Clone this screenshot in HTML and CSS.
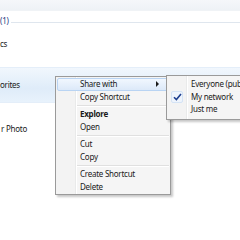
FILE: index.html
```html
<!DOCTYPE html>
<html>
<head>
<meta charset="utf-8">
<link rel="stylesheet" href="styles.css">
</head>
<body>
<div class="explorer">
  <div class="toolbar"></div>
  <div class="group"><span class="group-title">(1)</span><span class="group-line"></span></div>
  <div class="row row-cs">cs</div>
  <div class="row row-fav">orites</div>
  <div class="row row-photo">r Photo</div>
</div>

<div class="menu">
  <div class="item active">Share with<span class="arrow"></span></div>
  <div class="item">Copy Shortcut</div>
  <div class="sep"></div>
  <div class="item bold">Explore</div>
  <div class="item">Open</div>
  <div class="sep"></div>
  <div class="item">Cut</div>
  <div class="item">Copy</div>
  <div class="sep"></div>
  <div class="item">Create Shortcut</div>
  <div class="item">Delete</div>
</div>

<div class="submenu">
  <div class="item">Everyone (public)</div>
  <div class="item checked"><span class="check"><svg width="9" height="8" viewBox="0 0 9 8"><path d="M1 4.2 L3.4 6.6 L8 1" fill="none" stroke="#1e3f8f" stroke-width="1.6"/></svg></span>My network</div>
  <div class="item">Just me</div>
</div>
</body>
</html>
```

FILE: styles.css
```css
html, body {
  margin: 0;
  padding: 0;
}
body {
  width: 240px;
  height: 240px;
  overflow: hidden;
  position: relative;
  background: #ffffff;
  font-family: "Noto Sans", "Open Sans", sans-serif;
  font-size: 8px;
  letter-spacing: -0.25px;
  color: #1a1a1a;
}
.explorer {
  display: flex;
  flex-direction: column;
}
.toolbar {
  height: 10px;
  background: linear-gradient(#f5f7fa, #eef2f6);
  border-bottom: 1px solid #f0f3f6;
}
.group {
  display: flex;
  align-items: center;
  height: 16px;
  margin-top: 2px;
}
.group-title {
  color: #1f3a80;
  line-height: 16px;
  padding-right: 2px;
}
.group-line {
  flex: 1;
  height: 1px;
  margin-top: 3px;
  background: #dfe6ee;
}
.row {
  line-height: 12px;
  white-space: nowrap;
}
.row-cs {
  margin-top: 9px;
}
.row-fav {
  margin-top: 17px;
  height: 34px;
  line-height: 34px;
  background: linear-gradient(#f1f7fd, #dfecf9 60%, #e8f2fc);
  border-top: 1px solid #e4eef9;
  border-bottom: 1px solid #e4eef9;
}
.row-photo {
  margin-top: 20px;
  padding-left: 1px;
}

.menu {
  position: absolute;
  left: 55px;
  top: 76px;
  width: 116px;
  box-sizing: border-box;
  padding: 1px;
  border: 1px solid #9a9a9a;
  background: linear-gradient(to right, #f3f3f3 19px, #e9eaea 19px, #e9eaea 20px, #ffffff 20px, #ffffff 21px, #f5f5f5 21px);
  box-shadow: 2px 2px 2px rgba(0, 0, 0, 0.22);
}
.item {
  position: relative;
  height: 12.5px;
  line-height: 12.5px;
  padding-left: 23px;
  white-space: nowrap;
  box-sizing: border-box;
}
.item.bold {
  font-weight: bold;
}
.menu .item.active {
  background: linear-gradient(#f1f7fe, #dce9f9);
  border: 1px solid #b9d4f3;
  border-radius: 2px;
  line-height: 10.5px;
  padding-left: 22px;
}
.arrow {
  position: absolute;
  right: 9px;
  top: 2px;
  width: 0;
  height: 0;
  border-top: 3px solid transparent;
  border-bottom: 3px solid transparent;
  border-left: 3px solid #1a1a1a;
}
.sep {
  margin-left: 20px;
  box-sizing: border-box;
  margin-top: 2px;
  height: 3px;
  border-top: 1px solid #e0e0e0;
  background: linear-gradient(#ffffff 1px, transparent 1px);
}

.submenu {
  position: absolute;
  left: 166px;
  top: 75px;
  width: 90px;
  box-sizing: border-box;
  padding: 2px 1px 3px;
  border: 1px solid #9a9a9a;
  background: linear-gradient(to right, #f3f3f3 19px, #e9eaea 19px, #e9eaea 20px, #ffffff 20px, #ffffff 21px, #f5f5f5 21px);
  box-shadow: 2px 2px 2px rgba(0, 0, 0, 0.22);
}
.check {
  position: absolute;
  left: 3px;
  top: 0;
  width: 12px;
  height: 12px;
  box-sizing: border-box;
  display: flex;
  align-items: center;
  justify-content: center;
  border: 1px solid #d4e3f5;
  border-radius: 2px;
  background: #eef4fc;
}
```
